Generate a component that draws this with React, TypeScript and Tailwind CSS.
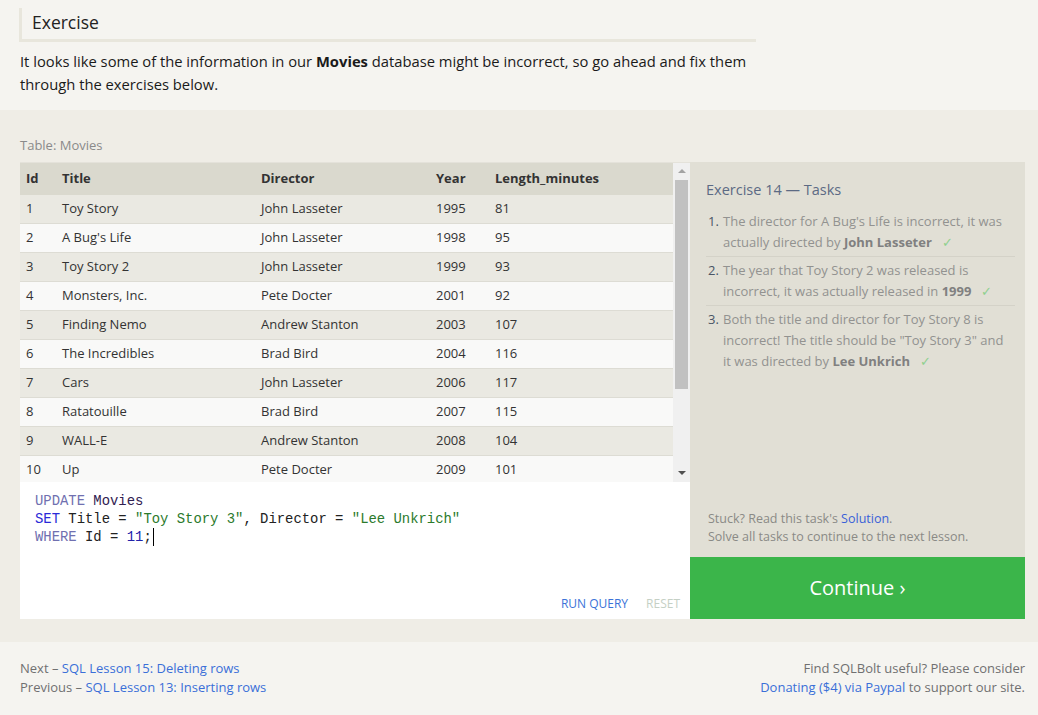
import React from 'react'

const movies = [
  [1, 'Toy Story', 'John Lasseter', 1995, 81],
  [2, "A Bug's Life", 'John Lasseter', 1998, 95],
  [3, 'Toy Story 2', 'John Lasseter', 1999, 93],
  [4, 'Monsters, Inc.', 'Pete Docter', 2001, 92],
  [5, 'Finding Nemo', 'Andrew Stanton', 2003, 107],
  [6, 'The Incredibles', 'Brad Bird', 2004, 116],
  [7, 'Cars', 'John Lasseter', 2006, 117],
  [8, 'Ratatouille', 'Brad Bird', 2007, 115],
  [9, 'WALL-E', 'Andrew Stanton', 2008, 104],
  [10, 'Up', 'Pete Docter', 2009, 101],
]

function Check() {
  return <span className="ml-[10px] text-[#8fd08f]">✓</span>
}

function MoviesTable() {
  return (
    <div className="flex h-[320px] overflow-hidden border-t border-[#e4e2da]">
      <div className="flex-1 overflow-hidden">
        <table className="w-full border-collapse text-[13px] text-[#333]">
          <thead>
            <tr className="h-[32px] bg-[#dad9ce] text-left font-bold text-[#333]">
              <th className="w-[42px] pl-[6px]">Id</th>
              <th className="w-[199px] pl-0">Title</th>
              <th className="w-[175px]">Director</th>
              <th className="w-[59px]">Year</th>
              <th>Length_minutes</th>
            </tr>
          </thead>
          <tbody>
            {movies.map((m, i) => (
              <tr
                key={m[0]}
                className={`h-[29px] border-b border-[#dddcd4] ${i % 2 === 0 ? 'bg-[#eae9e2]' : 'bg-[#f9f9f8]'}`}
              >
                <td className="pl-[6px]">{m[0]}</td>
                <td>{m[1]}</td>
                <td>{m[2]}</td>
                <td>{m[3]}</td>
                <td>{m[4]}</td>
              </tr>
            ))}
          </tbody>
        </table>
      </div>
      {/* fake scrollbar */}
      <div className="flex w-[17px] flex-col items-center bg-[#f0f0f0]">
        <div className="flex h-[17px] items-center justify-center">
          <div className="h-0 w-0 border-x-[4px] border-b-[4px] border-x-transparent border-b-[#a3a3a3]" />
        </div>
        <div className="h-[209px] w-[13px] bg-[#c1c1c1]" />
        <div className="flex-1" />
        <div className="flex h-[17px] items-center justify-center">
          <div className="h-0 w-0 border-x-[4px] border-t-[4px] border-x-transparent border-t-[#505050]" />
        </div>
      </div>
    </div>
  )
}

function Editor() {
  return (
    <div className="flex h-[137px] flex-col bg-white">
      <pre className="flex-1 px-[15px] pt-[10px] font-['Liberation_Mono',monospace] text-[13.9px] leading-[18px] text-[#222]">
        <span className="text-[#7070b0]">UPDATE</span> <span className="text-[#302050]">Movies</span>
        {'\n'}
        <span className="text-[#2a2ad8]">SET</span> Title = <span className="text-[#2c7a2c]">"Toy Story 3"</span>, Director ={' '}
        <span className="text-[#2c7a2c]">"Lee Unkrich"</span>
        {'\n'}
        <span className="text-[#7070b0]">WHERE</span> Id = <span className="text-[#2222aa]">11</span>;
        <span className="relative">
          <span className="absolute left-[1px] top-[-1px] h-[18px] w-px bg-black" />
        </span>
      </pre>
      <div className="flex justify-end gap-[18px] pr-[10px] pb-[6px] text-[12px]">
        <span className="text-[#3b73d8]">RUN QUERY</span>
        <span className="text-[#c5d0c5]">RESET</span>
      </div>
    </div>
  )
}

function TaskPanel() {
  return (
    <div className="flex w-[335px] flex-col bg-[#e1dfd5]">
      <div className="flex-1 pl-[16px] pr-[10px] pt-[17px]">
        <div className="text-[14.5px] text-[#5c6a84]">Exercise 14 — Tasks</div>
        <ol className="mt-[11px] text-[13px] leading-[21px] text-[#929290]">
          <li className="flex border-b border-[#d4d2c8] pb-[3px]">
            <span className="w-[17px] shrink-0 pl-[2px] text-[#4a5566]">1.</span>
            <span>
              The director for A Bug's Life is incorrect, it was actually directed by{' '}
              <b className="text-[#808080]">John Lasseter</b>
              <Check />
            </span>
          </li>
          <li className="flex border-b border-[#d4d2c8] pt-[3px] pb-[3px]">
            <span className="w-[17px] shrink-0 pl-[2px] text-[#4a5566]">2.</span>
            <span>
              The year that Toy Story 2 was released is incorrect, it was actually released in{' '}
              <b className="text-[#808080]">1999</b>
              <Check />
            </span>
          </li>
          <li className="flex pt-[3px]">
            <span className="w-[17px] shrink-0 pl-[2px] text-[#4a5566]">3.</span>
            <span>
              Both the title and director for Toy Story 8 is incorrect! The title should be "Toy Story 3" and it{'\u00a0'}was
              directed by <b className="text-[#808080]">Lee Unkrich</b>
              <Check />
            </span>
          </li>
        </ol>
      </div>
      <div className="px-[18px] pb-[11px] text-[12.5px] leading-[18px] text-[#8a8a86]">
        <div>
          Stuck? Read this task's <span className="text-[#3a5fd8]">Solution</span>.
        </div>
        <div>Solve all tasks to continue to the next lesson.</div>
      </div>
      <div className="flex h-[62px] items-center justify-center bg-[#3bb54a] text-[20px] text-white">
        Continue ›
      </div>
    </div>
  )
}

export default function App() {
  return (
    <div className="min-h-screen bg-[#f5f4f0] font-['Open_Sans',sans-serif]">
      <div className="px-[19px] pt-[8px] pb-[14px]">
        <div className="w-[737px]">
          <h3 className="border-b-[3px] border-l-[3px] border-[#e8e6dc] pl-[10px] pb-[3px] text-[17.5px] leading-[28px] text-[#222]">
            Exercise
          </h3>
          <p className="mt-[8px] pl-[1px] text-[14.75px] leading-[23px] text-[#1a1a1a]">
            It looks like some of the information in our <b>Movies</b> database might be incorrect, so go ahead and fix them
            <br />
            through the exercises below.
          </p>
        </div>
      </div>

      <div className="bg-[#efede6] px-[20px] pr-[13px] pt-[26px] pb-[23px]">
        <div className="text-[13px] text-[#8a8a8a]">Table: Movies</div>
        <div className="mt-[6px] flex">
          <div className="flex w-[670px] flex-col">
            <MoviesTable />
            <Editor />
          </div>
          <TaskPanel />
        </div>
      </div>

      <div className="flex justify-between px-[20px] pr-[13px] pt-[17px] text-[13px] leading-[19px] text-[#707070]">
        <div>
          <div>
            Next – <span className="text-[#3a6fd8]">SQL Lesson 15: Deleting rows</span>
          </div>
          <div>
            Previous – <span className="text-[#3a6fd8]">SQL Lesson 13: Inserting rows</span>
          </div>
        </div>
        <div className="text-right">
          <div>Find SQLBolt useful? Please consider</div>
          <div>
            <span className="text-[#3a6fd8]">Donating ($4) via Paypal</span> to support our site.
          </div>
        </div>
      </div>
    </div>
  )
}
